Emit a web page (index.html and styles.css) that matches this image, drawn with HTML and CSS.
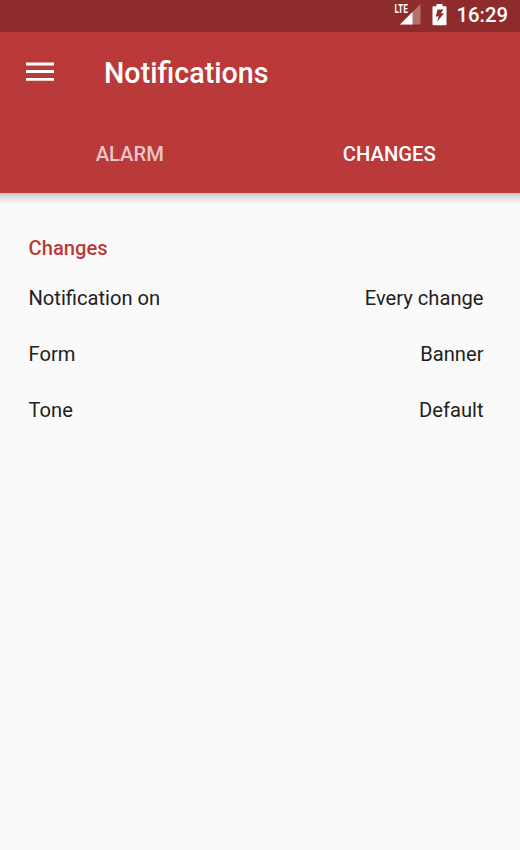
FILE: index.html
```html
<!DOCTYPE html>
<html lang="en">
<head>
<meta charset="utf-8">
<title>Notifications</title>
<link rel="stylesheet" href="styles.css">
</head>
<body>
<div class="status">
  <svg class="signal" width="28" height="25" viewBox="0 0 28 25">
    <path d="M27.500 4V24.500H7z" fill="#b46f70"/>
    <path d="M19.500 12V24.500H7z" fill="#fff"/>
    <text class="lte" x="1.500" y="13.200" textLength="13.500" lengthAdjust="spacingAndGlyphs">LTE</text>
  </svg>
  <svg class="battery" width="15" height="22" viewBox="0 0 15 22">
    <path fill="#fff" fill-rule="evenodd" d="M4.500 0h6v2.200h3Q14.500 2.200 14.500 3.200v17Q14.500 21.300 13.500 21.300h-12Q.5 21.300.5 20.200v-17Q.5 2.200 1.500 2.200h3zM5.500 5.500 3.800 12.500h3L5 18l7-8.800H8.800L11.500 5.500z"/>
  </svg>
  <span class="clock">16:29</span>
</div>
<header class="appbar">
  <div class="toolbar">
    <svg class="menu" width="28" height="20" viewBox="0 0 28 20"><path d="M0 2h28M0 9.500h28M0 17.300h28" stroke="#fff" stroke-width="2.800"/></svg>
    <h1 class="title">Notifications</h1>
  </div>
  <nav class="tabs">
    <span class="tab">ALARM</span>
    <span class="tab active">CHANGES</span>
  </nav>
</header>
<div class="shadow"></div>
<main class="content">
  <h2 class="section">Changes</h2>
  <div class="row"><span>Notification on</span><span>Every change</span></div>
  <div class="row"><span>Form</span><span>Banner</span></div>
  <div class="row"><span>Tone</span><span>Default</span></div>
</main>
</body>
</html>
```
FILE: styles.css
```css
* { box-sizing: border-box; }
body { margin: 0; height: 850px; overflow: hidden; background: #fafafa; color: #212121; font-family: Roboto, sans-serif; }
.status { height: 32px; background: #8e2b2c; display: flex; align-items: flex-start; justify-content: flex-end; padding-right: 12px; color: #fff; }
.signal { margin-right: 11px; }
.lte { font: bold 13px Roboto, sans-serif; fill: #fff; }
.battery { margin: 4px 10px 0 0; }
.clock { font-size: 20.300px; font-weight: 500; line-height: 31px; }
.appbar { height: 161px; background: #ba3939; color: #fff; }
.shadow { height: 12px; background: linear-gradient(#c6c6c6, #e6e6e6 50%, #fafafa); }
.toolbar { height: 81px; display: flex; align-items: center; padding-left: 26px; }
.menu { margin: 0 50px 2px 0; }
.title { margin: 0; padding-top: 1px; font-size: 28.700px; font-weight: 500; line-height: 32px; }
.tabs { height: 80px; padding: 2px 1px 0 0; display: grid; grid-template-columns: 1fr 1fr; align-items: center; text-align: center; }
.tab { font-size: 20.200px; font-weight: 500; color: #edc5c5; }
.tab.active { color: #fff; }
.content { padding: 28px 36.500px 0 28.500px; }
.section { margin: 0 0 5.500px; font-size: 20.200px; line-height: 31px; font-weight: 500; color: #ba3939; }
.row { height: 56.300px; display: flex; justify-content: space-between; align-items: center; font-size: 20.150px; }
```
